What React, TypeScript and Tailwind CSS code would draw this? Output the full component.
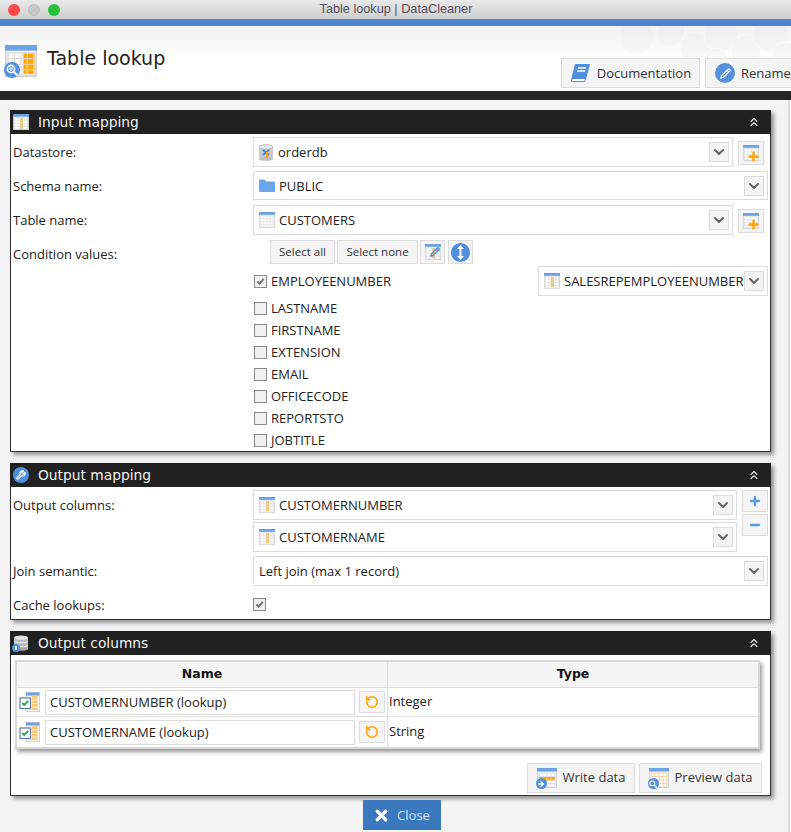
import { ChevronDown, ChevronsUp, Plus, Minus, RotateCcw, X, Wrench, Pencil, ArrowRight } from "lucide-react";
import type { ReactNode } from "react";

const BODY = "font-['Open_Sans',sans-serif]";
const HEAD = "font-['DejaVu_Sans',sans-serif]";

// ─── Icons ────────────────────────────────────────────────────────────────────

function TableIcon({ size = 16, hilite = "col" }: { size?: number; hilite?: "none" | "col" | "right" | "row" | "outline" }) {
  const cell = hilite === "outline" ? "#f5c68a" : "#d8d8d8";
  const xs = [2, 6, 10, 14, 18];
  const ys = [5, 8.5, 12, 15.5, 19];
  return (
    <svg width={size} height={size} viewBox="0 0 20 20" className="shrink-0">
      <rect x="0.5" y="0.5" width="19" height="19" fill="#f0f0f0" stroke="#d4d4d4" />
      <rect x="0" y="0" width="20" height="3.5" fill="#6ba3e6" />
      <rect x="2" y="5" width="16" height="13" fill="#fff" />
      {hilite === "col" && <rect x="8.5" y="5" width="4" height="13" fill="#f7c56a" />}
      {hilite === "right" && <rect x="11.5" y="5" width="7" height="13" fill="#ffa500" />}
      {hilite === "row" && <rect x="2" y="9" width="16" height="3.5" fill="#ffa500" />}
      {xs.map((x) => (
        <line key={x} x1={x} y1="5" x2={x} y2="18" stroke={cell} strokeWidth="0.7" />
      ))}
      {ys.map((y) => (
        <line key={y} x1="2" y1={y} x2="18" y2={y} stroke={cell} strokeWidth="0.7" />
      ))}
    </svg>
  );
}

function BlueBadge({ size, children }: { size: number; children: ReactNode }) {
  return (
    <span className="flex items-center justify-center rounded-full bg-[#5291dc] text-white absolute" style={{ width: size, height: size, left: -1, bottom: -1 }}>
      {children}
    </span>
  );
}

function Lens({ size = 9, plus = false }: { size?: number; plus?: boolean }) {
  return (
    <svg width={size} height={size} viewBox="0 0 12 12" fill="none" stroke="#fff" strokeWidth="1.6">
      <circle cx="5" cy="5" r="3.6" />
      <path d="M8 8l3.4 3.4" strokeWidth="2" />
      {plus && <path d="M3 5h4M5 3v4" strokeWidth="1.2" />}
    </svg>
  );
}

function DatastoreIcon() {
  return (
    <svg width="16" height="17" viewBox="0 0 16 17" className="shrink-0 -ml-[1px]">
      <rect x="1" y="2" width="14" height="13" rx="1" fill="#c9c9c9" />
      <ellipse cx="8" cy="3" rx="7" ry="2.4" fill="#e6e6e6" stroke="#a8a8a8" strokeWidth="0.7" />
      <ellipse cx="8" cy="15" rx="7" ry="1.8" fill="#bcbcbc" />
      <path d="M5 6l6 5M11 6l-6 5" stroke="#3f83d6" strokeWidth="2" />
      <path d="M9 8v6" stroke="#f59e0b" strokeWidth="2.4" />
    </svg>
  );
}

function BookIcon() {
  return (
    <svg width="21" height="20" viewBox="0 0 21 20" className="shrink-0">
      <path d="M5 1h15l-4 16H1z" fill="#4f8fdb" />
      <path d="M2 15.5h13.5l-.7 3H1.5z" fill="#fff" stroke="#4f8fdb" strokeWidth="1" />
      <path d="M8 5h8M7.2 8h8" stroke="#fff" strokeWidth="1.3" />
    </svg>
  );
}

function FolderIcon() {
  return (
    <svg width="16" height="13" viewBox="0 0 16 13" className="shrink-0">
      <path d="M0 1.5A1 1 0 0 1 1 .5h4.5l1.5 2h8a1 1 0 0 1 1 1V12a1 1 0 0 1-1 1H1a1 1 0 0 1-1-1z" fill="#6aa5ea" />
    </svg>
  );
}

function DbInfoIcon() {
  return (
    <span className="relative inline-flex w-[16px] h-[16px] shrink-0">
      <svg width="16" height="16" viewBox="0 0 16 16">
        <rect x="1" y="2" width="14" height="12" fill="#bdbdbd" />
        <ellipse cx="8" cy="2.6" rx="7" ry="2.2" fill="#e4e4e4" />
        <path d="M1 6.5c2 1.6 12 1.6 14 0M1 10.5c2 1.6 12 1.6 14 0" stroke="#eee" fill="none" strokeWidth="1" />
        <ellipse cx="8" cy="14" rx="7" ry="1.8" fill="#a9a9a9" />
      </svg>
      <BlueBadge size={8}>
        <span className="w-[2px] h-[4px] bg-white" />
      </BlueBadge>
    </span>
  );
}

function CheckColumnIcon() {
  return (
    <span className="relative inline-flex w-[21px] h-[20px] shrink-0">
      <svg width="21" height="20" viewBox="0 0 21 20">
        <rect x="7" y="0.5" width="13.5" height="19" fill="#f0f0f0" stroke="#d4d4d4" />
        <rect x="7" y="0.5" width="13.5" height="3" fill="#6ba3e6" />
        <rect x="13" y="4" width="5.5" height="14" fill="#f9cb78" />
        <path d="M13 8h5.5M13 11.5h5.5M13 15h5.5" stroke="#fff" strokeWidth="0.7" />
        <rect x="1" y="6" width="10.5" height="10.5" fill="#fff" stroke="#5b7fa6" strokeWidth="1.2" />
        <path d="M3.2 11l2 2 4-4" fill="none" stroke="#2aa34a" strokeWidth="1.8" />
      </svg>
    </span>
  );
}

// ─── Controls ─────────────────────────────────────────────────────────────────

function Combo({ width, icon, children }: { width: string; icon?: ReactNode; children: ReactNode }) {
  return (
    <div className={`flex items-center h-full ${width} bg-white border border-[#dcdcdc] pl-[5px] pr-[3px] gap-[4px] text-[13px] text-[#222]`}>
      {icon}
      <span className="flex-1 whitespace-nowrap pt-[2px] -mr-[4px] min-w-0">{children}</span>
      <span className="flex items-center justify-center w-[20px] h-[20px] bg-[#f4f4f4] border border-[#dcdcdc] shrink-0">
        <ChevronDown size={16} strokeWidth={3} className="text-[#666]" />
      </span>
    </div>
  );
}

function Check({ on }: { on?: boolean }) {
  return (
    <span className="flex items-center justify-center w-[13px] h-[13px] border border-[#8a8a8a] bg-[#f1f1f1] shrink-0">
      {on && (
        <svg width="9" height="9" viewBox="0 0 10 10">
          <path d="M1.5 5l2.5 2.5L8.5 2" fill="none" stroke="#777" strokeWidth="2.2" />
        </svg>
      )}
    </span>
  );
}

function SquareBtn({ className, children }: { className: string; children: ReactNode }) {
  return <button className={`flex items-center justify-center bg-[#f4f4f4] border border-[#dcdcdc] shrink-0 ${className}`}>{children}</button>;
}

function AddTableBtn() {
  return (
    <SquareBtn className="w-[26px] h-[24px] relative">
      <TableIcon size={16} hilite="none" />
      <Plus size={13} strokeWidth={4.5} className="absolute right-[3px] bottom-[1px] text-[#ffa500]" />
    </SquareBtn>
  );
}

function Row({ label, labelClass = "pt-[2px]", className, children }: { label?: string; labelClass?: string; className: string; children: ReactNode }) {
  return (
    <div className={`flex ${className}`}>
      <div className={`w-[242px] shrink-0 pl-[2px] flex items-center text-[13px] text-[#222] ${labelClass}`}>{label}</div>
      {children}
    </div>
  );
}

function Panel({ title, icon, bodyClass, children }: { title: string; icon: ReactNode; bodyClass: string; children: ReactNode }) {
  return (
    <section className="w-[761px] ml-[10px] shadow-[3px_3px_4px_rgba(0,0,0,0.4)]">
      <header className="flex items-center h-[24px] bg-[#212121] pl-[3px] pr-[10px] text-white">
        <span className="w-[16px] h-[16px] flex items-center justify-center">{icon}</span>
        <span className={`${HEAD} ml-[9px] text-[13.8px] flex-1 text-[#f2f2f2]`}>{title}</span>
        <ChevronsUp size={14} strokeWidth={2} className="text-[#eee]" />
      </header>
      <div className={`bg-white border-x border-b border-[#333] ${bodyClass}`}>{children}</div>
    </section>
  );
}

const COLUMNS = ["LASTNAME", "FIRSTNAME", "EXTENSION", "EMAIL", "OFFICECODE", "REPORTSTO", "JOBTITLE"];

const OUTPUT_ROWS = [
  { name: "CUSTOMERNUMBER (lookup)", type: "Integer", h: "h-[29px]" },
  { name: "CUSTOMERNAME (lookup)", type: "String", h: "h-[30px]" },
];

// ─── Page ─────────────────────────────────────────────────────────────────────

export default function App() {
  return (
    <div className={`${BODY} w-[791px] h-[832px] overflow-hidden bg-[#f4f4f4] flex flex-col`}>
      {/* window title bar */}
      <div className="h-[19px] shrink-0 flex items-center relative bg-gradient-to-b from-[#e9e9e9] to-[#cfcfcf]">
        <div className="flex gap-[8px] pl-[8px]">
          <span className="w-[12px] h-[12px] rounded-full bg-[#fc4c4a]" />
          <span className="w-[12px] h-[12px] rounded-full bg-[#c8c8c8] border border-[#bbb]" />
          <span className="w-[12px] h-[12px] rounded-full bg-[#27c23c]" />
        </div>
        <span className="flex-1 text-center text-[12.7px] text-[#55505a] font-['Liberation_Sans',sans-serif] pr-[59px]">Table lookup | DataCleaner</span>
      </div>
      <div className="h-[7px] shrink-0 bg-[#4a86cb]" />

      {/* banner */}
      <div className="h-[65px] shrink-0 relative overflow-hidden bg-gradient-to-b from-[#f1f1f1] via-white to-white">
        <svg width="170" height="50" viewBox="0 0 170 50" className="absolute right-0 top-0 opacity-30">
          {[[15, 10, 18], [50, 6, 14], [75, 22, 16], [100, 8, 17], [125, 24, 15], [150, 8, 18], [165, 30, 14], [95, 34, 12], [140, 44, 12]].map(([cx, cy, r]) => (
            <circle key={`${cx}-${cy}`} cx={cx} cy={cy} r={r} fill="#e4e4e4" fillOpacity="0.6" stroke="#fff" />
          ))}
        </svg>
        <div className="relative flex h-full">
          <span className="relative w-[32px] h-[32px] ml-[5px] mt-[19px] shrink-0">
            <TableIcon size={32} hilite="right" />
            <BlueBadge size={16}>
              <Lens size={12} plus />
            </BlueBadge>
          </span>
          <span className={`${HEAD} ml-[10px] mt-[19px] text-[19px] leading-[26px] text-[#222]`}>Table lookup</span>
          <div className="ml-auto mr-[-40px] mt-[32px] flex gap-[5px] text-[13px] text-[#333]">
            <button className="flex items-center justify-center gap-[6px] w-[139px] h-[30px] bg-[#f4f4f4] border border-[#dcdcdc]">
              <BookIcon />
              <span className="pt-[2px]">Documentation</span>
            </button>
            <button className="flex items-center gap-[6px] pl-[9px] w-[126px] h-[30px] bg-[#f4f4f4] border border-[#dcdcdc]">
              <span className="flex items-center justify-center w-[20px] h-[20px] rounded-full bg-[#5291dc]">
                <Pencil size={11} strokeWidth={2.5} className="text-white" />
              </span>
              <span className="pt-[2px]">Rename</span>
            </button>
          </div>
        </div>
      </div>
      <div className="h-[9px] shrink-0 bg-[#262626]" />

      {/* content */}
      <div className="flex-1 flex flex-col pt-[10px] relative border-r-2 border-[#dcdcdc] w-[790px]">
        <Panel title="Input mapping" icon={<TableIcon size={16} />} bodyClass="h-[318px] pt-[3px] flex flex-col">
          <Row label="Datastore:" className="h-[30px]">
            <Combo width="w-[480px]" icon={<DatastoreIcon />}>orderdb</Combo>
            <span className="ml-[5px] mt-[4px]"><AddTableBtn /></span>
          </Row>
          <Row label="Schema name:" className="h-[29px] mt-[4px]">
            <Combo width="w-[515px]" icon={<FolderIcon />}>PUBLIC</Combo>
          </Row>
          <Row label="Table name:" className="h-[30px] mt-[5px]">
            <Combo width="w-[480px]" icon={<TableIcon hilite="none" />}>CUSTOMERS</Combo>
            <span className="ml-[5px] mt-[4px]"><AddTableBtn /></span>
          </Row>
          <Row label="Condition values:" labelClass="pt-[6px]" className="h-[24px] mt-[5px]">
            <div className="flex gap-[2px] ml-[17px] text-[11.5px] text-[#333]">
              <button className="w-[65px] bg-[#f4f4f4] border border-[#dcdcdc]">Select all</button>
              <button className="w-[81px] bg-[#f4f4f4] border border-[#dcdcdc]">Select none</button>
              <SquareBtn className="w-[25px] relative">
                <TableIcon size={16} hilite="col" />
                <Pencil size={10} strokeWidth={3} className="absolute right-[4px] top-[6px] text-[#3f83d6]" />
              </SquareBtn>
              <SquareBtn className="w-[25px] ml-[1px]">
                <span className="flex items-center justify-center w-[19px] h-[19px] rounded-full bg-[#4f8fdb]">
                  <svg width="9" height="15" viewBox="0 0 9 15" fill="#fff">
                    <path d="M4.5 0L8 4H1zM4.5 15L1 11h7zM3.5 4h2v7h-2z" />
                  </svg>
                </span>
              </SquareBtn>
            </div>
          </Row>
          <div className="flex h-[30px] mt-[2px] items-center">
            <div className="flex items-center gap-[4px] ml-[243px] text-[13px] text-[#222] w-[284px]">
              <Check on />
              <span className="pt-[2px]">EMPLOYEENUMBER</span>
            </div>
            <Combo width="w-[230px]" icon={<TableIcon />}>SALESREPEMPLOYEENUMBER</Combo>
          </div>
          <div className="flex flex-col mt-[1px]">
            {COLUMNS.map((c) => (
              <div key={c} className="flex items-center gap-[4px] h-[22px] ml-[243px] text-[13px] text-[#222]">
                <Check />
                <span className="pt-[2px]">{c}</span>
              </div>
            ))}
          </div>
        </Panel>

        <div className="h-[11px] shrink-0" />

        <Panel title="Output mapping" icon={<span className="flex items-center justify-center w-[16px] h-[16px] rounded-full bg-[#4f8fdb]"><Wrench size={10} strokeWidth={3} className="text-white" /></span>} bodyClass="h-[133px] pt-[3px]">
          <Row label="Output columns:" className="h-[30px]">
            <Combo width="w-[484px]" icon={<TableIcon />}>CUSTOMERNUMBER</Combo>
            <SquareBtn className="w-[26px] h-[22px] ml-[5px]"><Plus size={14} strokeWidth={4} className="text-[#5b9be6]" /></SquareBtn>
          </Row>
          <Row className="h-[30px] mt-[2px]">
            <Combo width="w-[484px]" icon={<TableIcon />}>CUSTOMERNAME</Combo>
            <SquareBtn className="w-[26px] h-[22px] ml-[5px] mt-[-8px]"><Minus size={14} strokeWidth={4} className="text-[#5b9be6]" /></SquareBtn>
          </Row>
          <Row label="Join semantic:" className="h-[30px] mt-[4px]">
            <Combo width="w-[515px]">Left join (max 1 record)</Combo>
          </Row>
          <Row label="Cache lookups:" labelClass="pt-[4px]" className="h-[24px] mt-[6px]">
            <span className="flex items-center"><Check on /></span>
          </Row>
        </Panel>

        <div className="h-[11px] shrink-0" />

        <Panel title="Output columns" icon={<DbInfoIcon />} bodyClass="h-[141px] pt-[5px] flex flex-col">
          <div className="ml-[4px] w-[745px] border-2 border-[#d9d9d9] bg-white shadow-[2px_3px_4px_rgba(0,0,0,0.4)] text-[13px] text-[#222]">
            <div className={`${HEAD} flex h-[26px] bg-[#f5f5f5] border-b border-[#dcdcdc] text-[12.5px] font-semibold text-[#111]`}>
              <div className="w-[371px] flex items-center justify-center border-r border-[#dcdcdc]">Name</div>
              <div className="flex-1 flex items-center justify-center">Type</div>
            </div>
            {OUTPUT_ROWS.map((r, i) => (
              <div key={r.name} className={`flex ${r.h} ${i === 0 ? "border-b border-[#e2e2e2]" : ""}`}>
                <div className="w-[371px] flex items-center border-r border-[#dcdcdc] pl-[2px]">
                  <CheckColumnIcon />
                  <span className="ml-[5px] w-[310px] h-[25px] flex items-center pl-[4px] pt-[2px] border border-[#dcdcdc] bg-white">{r.name}</span>
                  <SquareBtn className="ml-[4px] w-[26px] h-[22px]"><RotateCcw size={14} strokeWidth={2.8} className="text-[#ffa500]" /></SquareBtn>
                </div>
                <div className="flex-1 flex items-center pl-[1px]">{r.type}</div>
              </div>
            ))}
          </div>
          <div className="flex justify-end gap-[4px] mt-[14px] mr-[8px] text-[13px] text-[#333]">
            <button className="flex items-center justify-center gap-[4px] w-[108px] h-[30px] bg-[#f4f4f4] border border-[#dcdcdc]">
              <span className="relative w-[22px] h-[20px]">
                <TableIcon size={20} hilite="row" />
                <BlueBadge size={11}><ArrowRight size={8} strokeWidth={4} /></BlueBadge>
              </span>
              Write data
            </button>
            <button className="flex items-center justify-center gap-[4px] w-[123px] h-[30px] bg-[#f4f4f4] border border-[#dcdcdc]">
              <span className="relative w-[22px] h-[20px]">
                <TableIcon size={20} hilite="outline" />
                <BlueBadge size={11}><Lens size={8} /></BlueBadge>
              </span>
              Preview data
            </button>
          </div>
        </Panel>

        <div className="flex justify-center mt-[4px] pl-[15px]">
          <button className="flex items-center justify-center gap-[7px] w-[78px] h-[30px] bg-[#3c78bd] text-[13px] text-[#d5e2f2]">
            <X size={17} strokeWidth={4.5} className="text-white" />
            <span className="pt-[2px]">Close</span>
          </button>
        </div>
      </div>
    </div>
  );
}
